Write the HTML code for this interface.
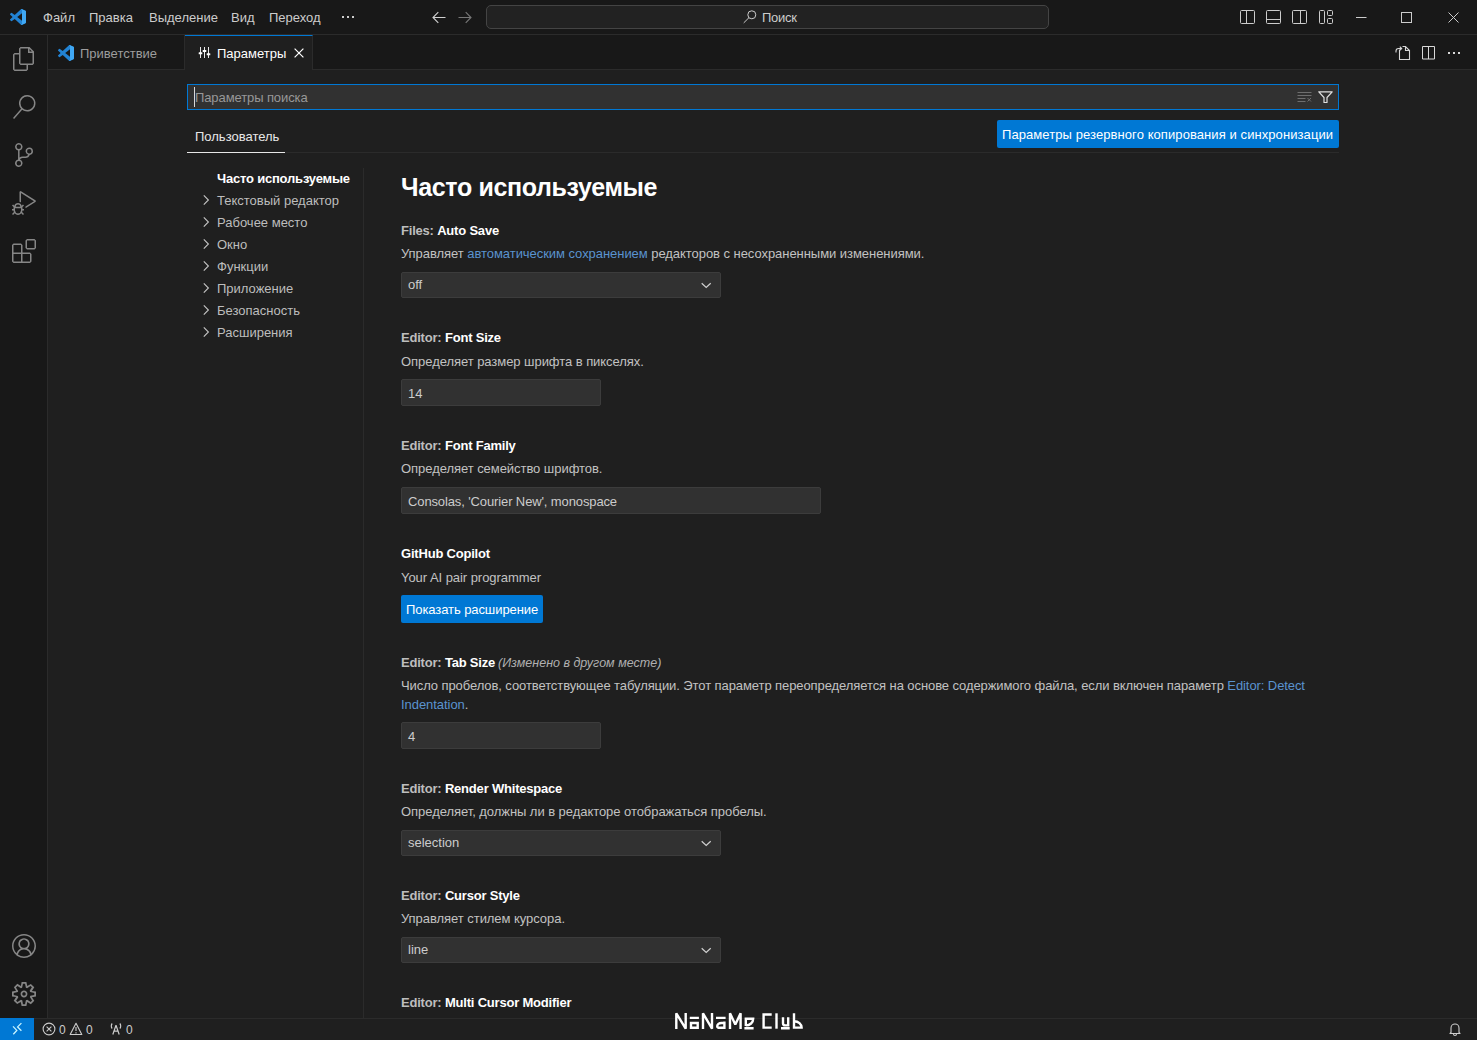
<!DOCTYPE html>
<html><head><meta charset="utf-8">
<style>
*{box-sizing:border-box;margin:0;padding:0}
html,body{width:1477px;height:1040px;overflow:hidden;background:#1f1f1f;font-family:"Liberation Sans",sans-serif;font-size:13px;color:#cccccc}
.a{position:absolute}
.t{position:absolute;white-space:nowrap;line-height:16px}
svg{position:absolute;overflow:visible}
#title{left:0;top:0;width:1477px;height:35px;background:#181818;border-bottom:1px solid #2b2b2b}
#act{left:0;top:35px;width:48px;height:983px;background:#181818;border-right:1px solid #2b2b2b}
#tabs{left:48px;top:35px;width:1429px;height:35px;background:#181818;border-bottom:1px solid #2b2b2b}
#status{left:0;top:1018px;width:1477px;height:22px;background:#1f1f1f;border-top:1px solid #2b2b2b}
.menu{color:#cccccc}
.ico{stroke:#cccccc;fill:none;stroke-width:1}
.aico{fill:#868686}
.lbl{color:#bdbdbd;font-weight:bold;letter-spacing:-0.2px}
.lbl b{color:#ffffff}
.desc{color:#c2c2c2;letter-spacing:-0.05px}
.link{color:#5a93cf}
.toc{color:#bdbdbd}
.inp{position:absolute;background:#313131;border:1px solid #3c3c3c;border-radius:2px}
.btn{position:absolute;background:#0078d4;border-radius:2px}
.val{color:#cccccc}
</style></head><body>

<!-- TITLE BAR -->
<div id="title" class="a"></div>
<svg style="left:10px;top:9px" width="16" height="16" viewBox="0 0 100 100">
  <path d="M96.46 10.8L75.86.87a6.23 6.23 0 0 0-7.1 1.2L29.35 38.04 12.19 25.01a4.16 4.16 0 0 0-5.32.24L1.36 30.26a4.16 4.16 0 0 0 0 6.16L16.24 50 1.36 63.58a4.16 4.16 0 0 0 0 6.16l5.5 5.01a4.16 4.16 0 0 0 5.32.24l17.16-13.03L68.76 97.93a6.23 6.23 0 0 0 7.1 1.2l20.6-9.92A6.25 6.25 0 0 0 100 83.58V16.42a6.25 6.25 0 0 0-3.54-5.62zM75.01 72.7L45.11 50l29.9-22.7z" fill="#2283d4"/>
  <path d="M75.86.87a6.23 6.23 0 0 0-7.1 1.2L75 6V94L68.76 97.93a6.23 6.23 0 0 0 7.1 1.2l20.6-9.92A6.25 6.25 0 0 0 100 83.58V16.42a6.25 6.25 0 0 0-3.54-5.620z" fill="#40a8f4"/>
</svg>
<div class="t menu" style="left:43px;top:10px">Файл</div>
<div class="t menu" style="left:89px;top:10px">Правка</div>
<div class="t menu" style="left:149px;top:10px">Выделение</div>
<div class="t menu" style="left:231px;top:10px">Вид</div>
<div class="t menu" style="left:269px;top:10px">Переход</div>
<svg style="left:342px;top:16px" width="12" height="3" viewBox="0 0 12 3"><rect x="0" y="0" width="2" height="2" fill="#cccccc"/><rect x="5" y="0" width="2" height="2" fill="#cccccc"/><rect x="10" y="0" width="2" height="2" fill="#cccccc"/></svg>

<!-- nav arrows -->
<svg style="left:432px;top:11px" width="14" height="13" viewBox="0 0 14 13"><path d="M13.5 6.5H1.2M6.3 1.2L1 6.5l5.3 5.3" fill="none" style="stroke:#d0d0d0;stroke-width:1.1"/></svg>
<svg style="left:458px;top:11px" width="14" height="13" viewBox="0 0 14 13"><path d="M0.5 6.5h12.3M7.7 1.2L13 6.5l-5.3 5.3" fill="none" style="stroke:#777777;stroke-width:1.1"/></svg>

<!-- command center -->
<div class="a" style="left:486px;top:5px;width:563px;height:24px;background:#222222;border:1px solid #444444;border-radius:5px"></div>
<svg style="left:743px;top:10px" width="14" height="14" viewBox="0 0 14 14"><circle cx="8.8" cy="4.8" r="4" class="ico" stroke-width="1.1"/><path d="M6 7.6L0.7 12.9" class="ico" stroke-width="1.2"/></svg>
<div class="t" style="left:762px;top:10px;color:#cccccc;letter-spacing:-0.3px">Поиск</div>

<!-- layout icons -->
<svg style="left:1240px;top:10px" width="16" height="14" viewBox="0 0 16 14"><rect x="0.5" y="0.5" width="14" height="13" rx="1" class="ico"/><path d="M6.5 0.5v13" class="ico"/></svg>
<svg style="left:1266px;top:10px" width="16" height="14" viewBox="0 0 16 14"><rect x="0.5" y="0.5" width="14" height="13" rx="1" class="ico"/><path d="M0.5 9.5h14" class="ico"/></svg>
<svg style="left:1292px;top:10px" width="16" height="14" viewBox="0 0 16 14"><rect x="0.5" y="0.5" width="14" height="13" rx="1" class="ico"/><path d="M8.5 0.5v13" class="ico"/></svg>
<svg style="left:1319px;top:10px" width="16" height="14" viewBox="0 0 16 14"><rect x="0.5" y="0.5" width="5" height="13" rx="1" class="ico"/><rect x="8.5" y="0.5" width="5" height="5" rx="1" class="ico"/><rect x="8.5" y="8.5" width="5" height="5" rx="1" class="ico"/></svg>
<!-- window controls -->
<svg style="left:1356px;top:12px" width="11" height="11" viewBox="0 0 11 11"><path d="M0 5.5h10.5" class="ico"/></svg>
<svg style="left:1401px;top:12px" width="11" height="11" viewBox="0 0 11 11"><rect x="0.5" y="0.5" width="10" height="10" class="ico"/></svg>
<svg style="left:1448px;top:12px" width="11" height="11" viewBox="0 0 11 11"><path d="M0.5 0.5l10 10M10.5 0.5l-10 10" class="ico"/></svg>

<!-- ACTIVITY BAR -->
<div id="act" class="a"></div>
<!-- explorer -->
<svg style="left:12px;top:47px" width="24" height="24" viewBox="0 0 24 24"><path class="aico" d="M17.5 0h-9L7 1.5V6H2.5L1 7.5v15.07L2.5 24h12.07L16 22.57V18h4.7l1.3-1.43V4.5L17.5 0zm0 2.12l2.38 2.38H17.5V2.12zm-3 20.38h-12v-15H7v9.07L8.5 18h6v4.5zm6-6h-12v-15H16V6h4.5v10.5z"/></svg>
<!-- search -->
<svg style="left:12px;top:95px" width="24" height="24" viewBox="0 0 24 24"><path class="aico" d="M15.25 0a8.25 8.25 0 0 0-6.18 13.72L1 22.88l1.12 1 8.05-9.12A8.251 8.251 0 1 0 15.25.01V0zm0 15a6.75 6.75 0 1 1 0-13.5 6.75 6.75 0 0 1 0 13.5z"/></svg>
<!-- scm -->
<svg style="left:12px;top:143px" width="24" height="24" viewBox="0 0 24 24"><path class="aico" d="M21.007 8.222A3.738 3.738 0 0 0 15.045 5.2a3.737 3.737 0 0 0 1.156 6.583 2.988 2.988 0 0 1-2.668 1.67h-2.99a4.456 4.456 0 0 0-2.989 1.165V7.4a3.737 3.737 0 1 0-1.494 0v9.117a3.776 3.776 0 1 0 1.816.099 2.99 2.99 0 0 1 2.668-1.667h2.99a4.484 4.484 0 0 0 4.223-3.039 3.736 3.736 0 0 0 3.25-3.687zM4.565 3.738a2.242 2.242 0 1 1 4.484 0 2.242 2.242 0 0 1-4.484 0zm4.484 16.441a2.242 2.242 0 1 1-4.484 0 2.242 2.242 0 0 1 4.484 0zm8.221-9.715a2.242 2.242 0 1 1 0-4.485 2.242 2.242 0 0 1 0 4.485z"/></svg>
<!-- debug -->
<svg style="left:12px;top:191px" width="24" height="24" viewBox="0 0 24 24"><path class="aico" d="M10.94 13.5l-1.32 1.32a3.73 3.73 0 0 0-7.24 0L1.06 13.5 0 14.56l1.72 1.72-.22.22V18H0v1.5h1.5v.08c.077.489.214.966.41 1.42L0 22.94 1.06 24l1.65-1.65A4.308 4.308 0 0 0 6 24a4.31 4.31 0 0 0 3.29-1.65L10.94 24 12 22.94 10.09 21c.198-.464.336-.951.41-1.45v-.1H12V18h-1.5v-1.5l-.22-.22L12 14.56l-1.06-1.060zM6 13.5a2.25 2.25 0 0 1 2.25 2.250h-4.5A2.250 2.250 0 0 1 6 13.500zm3 6a3.33 3.33 0 0 1-3 3 3.33 3.33 0 0 1-3-3v-2.25h6v2.25zm14.76-9.9v1.26L13.5 17.37V15.6l8.5-5.37L9 2v9.46a5.07 5.07 0 0 0-1.5-.72V.63L8.64 0l15.12 9.6z"/></svg>
<!-- extensions -->
<svg style="left:12px;top:239px" width="24" height="24" viewBox="0 0 24 24"><path class="aico" d="M13.5 1.5L15 0h7.5L24 1.5V9l-1.5 1.5H15L13.5 9V1.5zm1.5 0V9h7.5V1.5H15zM0 15V6l1.5-1.5H9L10.5 6v7.5H18l1.5 1.5v7.5L18 24H1.5L0 22.5V15zm9-1.5V6H1.5v7.5H9zM9 15H1.5v7.5H9V15zm1.5 7.5H18V15h-7.5v7.5z"/></svg>
<!-- account -->
<svg style="left:12px;top:934px" width="24" height="24" viewBox="0 0 16 16"><path class="aico" d="M16 7.992C16 3.58 12.416 0 8 0S0 3.58 0 7.992c0 2.43 1.104 4.62 2.832 6.09.016.016.032.016.032.032.144.112.288.224.448.336.08.048.144.111.224.175A7.98 7.98 0 0 0 8.016 16a7.98 7.98 0 0 0 4.48-1.375c.08-.048.144-.111.224-.16.144-.111.304-.223.448-.335.016-.016.032-.016.032-.032 1.696-1.487 2.8-3.676 2.8-6.106zm-8 7.001c-1.504 0-2.88-.48-4.016-1.279.016-.128.048-.255.08-.383a4.17 4.17 0 0 1 .416-.991c.176-.304.384-.576.64-.816.24-.24.528-.463.816-.639.304-.176.624-.304.976-.4A4.150 4.150 0 0 1 8 10.342a4.185 4.185 0 0 1 2.928 1.166c.368.368.656.8.864 1.295.112.288.192.592.24.911A7.03 7.03 0 0 1 8 14.993zm-2.448-7.4a2.49 2.49 0 0 1-.208-1.024c0-.351.064-.703.208-1.023.144-.32.336-.607.576-.847.24-.24.528-.431.848-.575.32-.144.672-.208 1.024-.208.368 0 .704.064 1.024.208.32.144.608.336.848.575.24.24.432.528.576.847.144.32.208.672.208 1.023 0 .368-.064.704-.208 1.023a2.84 2.84 0 0 1-.576.848 2.84 2.84 0 0 1-.848.575 2.715 2.715 0 0 1-2.064 0 2.84 2.84 0 0 1-.848-.575 2.526 2.526 0 0 1-.56-.848zm7.424 5.306c0-.032-.016-.048-.016-.08a5.22 5.22 0 0 0-.688-1.406 4.883 4.883 0 0 0-1.088-1.135 5.207 5.207 0 0 0-1.040-.608 2.82 2.82 0 0 0 .464-.383 4.2 4.2 0 0 0 .624-.784 3.624 3.624 0 0 0 .528-1.934 3.71 3.71 0 0 0-.288-1.47 3.799 3.799 0 0 0-.816-1.199 3.845 3.845 0 0 0-1.2-.8 3.72 3.72 0 0 0-1.472-.287 3.72 3.72 0 0 0-1.472.288 3.631 3.631 0 0 0-1.2.815 3.84 3.84 0 0 0-.8 1.199 3.71 3.71 0 0 0-.288 1.47c0 .352.048.688.144 1.007.096.336.224.640.4.927.16.288.384.544.624.784.144.144.304.271.48.383a5.12 5.12 0 0 0-1.040.624c-.416.32-.784.703-1.088 1.119a4.999 4.999 0 0 0-.688 1.406c-.016.032-.016.064-.016.08C1.776 11.636.992 9.910.992 7.992.992 4.140 4.144.991 8 .991s7.008 3.149 7.008 7.001a6.96 6.96 0 0 1-2.032 4.907z"/></svg>
<!-- gear -->
<svg style="left:12px;top:982px" width="24" height="24" viewBox="1 1 14 14"><path class="aico" d="M9.1 4.4L8.6 2H7.4l-.5 2.4-.7.3-2-1.3-.9.8 1.3 2-.2.7-2.4.5v1.2l2.4.5.3.8-1.300 2 .8.8 2-1.3.8.3.4 2.3h1.2l.5-2.4.8-.3 2 1.3.8-.8-1.3-2 .3-.8 2.3-.4V7.4l-2.4-.5-.3-.8 1.3-2-.8-.8-2 1.3-.7-.2zM9.4 1l.5 2.4L12 2.1l2 2-1.4 2.1 2.4.4v2.8l-2.4.5L14 12l-2 2-2.1-1.4-.5 2.4H6.6l-.5-2.4L4 13.9l-2-2 1.4-2.1L1 9.4V6.6l2.4-.5L2.1 4l2-2 2.1 1.4.4-2.4h2.8zm.6 7c0 1.1-.9 2-2 2s-2-.9-2-2 .9-2 2-2 2 .9 2 2zM8 9c.6 0 1-.4 1-1s-.4-1-1-1-1 .4-1 1 .4 1 1 1z"/></svg>

<!-- TABS -->
<div id="tabs" class="a"></div>
<div class="a" style="left:184px;top:35px;width:1px;height:34px;background:#2b2b2b"></div>
<div class="a" style="left:185px;top:35px;width:128px;height:35px;background:#1f1f1f;border-top:1px solid #0078d4;border-right:1px solid #2b2b2b"></div>
<svg style="left:58px;top:45px" width="16" height="16" viewBox="0 0 100 100">
  <path d="M96.46 10.8L75.86.87a6.23 6.23 0 0 0-7.1 1.2L29.35 38.04 12.19 25.01a4.16 4.16 0 0 0-5.32.24L1.36 30.26a4.16 4.16 0 0 0 0 6.16L16.24 50 1.36 63.58a4.16 4.16 0 0 0 0 6.16l5.5 5.01a4.16 4.16 0 0 0 5.32.24l17.16-13.03L68.76 97.93a6.23 6.23 0 0 0 7.1 1.2l20.6-9.92A6.25 6.25 0 0 0 100 83.58V16.42a6.25 6.25 0 0 0-3.54-5.62zM75.01 72.7L45.11 50l29.9-22.7z" fill="#2283d4"/>
  <path d="M75.86.87a6.23 6.23 0 0 0-7.1 1.2L75 6V94L68.76 97.93a6.23 6.23 0 0 0 7.1 1.2l20.6-9.92A6.25 6.25 0 0 0 100 83.58V16.42a6.25 6.25 0 0 0-3.54-5.620z" fill="#40a8f4"/>
</svg>
<div class="t" style="left:80px;top:46px;color:#9d9d9d">Приветствие</div>
<svg style="left:198px;top:47px" width="13" height="11" viewBox="0 0 13 11"><path d="M2.5 0v11M6.5 0v11M10.5 0v11" stroke="#e8e8e8" stroke-width="1"/><rect x="0.7" y="5.3" width="3.6" height="2" rx="0.5" fill="#ffffff"/><rect x="4.7" y="3" width="3.6" height="2" rx="0.5" fill="#ffffff"/><rect x="8.7" y="6.3" width="3.6" height="2" rx="0.5" fill="#ffffff"/></svg>
<div class="t" style="left:217px;top:46px;color:#ffffff">Параметры</div>
<svg style="left:294px;top:48px" width="10" height="10" viewBox="0 0 10 10"><path d="M0.6 0.6l8.8 8.8M9.4 0.6L0.6 9.4" stroke="#ffffff" stroke-width="1.2" fill="none"/></svg>
<!-- editor actions -->
<svg style="left:1395px;top:46px" width="16" height="14" viewBox="0 0 16 14"><path d="M4.5 3.5V13.5H14.5V4.5L10.5 0.5H7.5M10.5 0.5V4.5H14.5M1 6.5V5c0-1.7 1.2-2.5 2.6-2.5H6.5M4.8 0.7L6.7 2.5 4.8 4.3" fill="none" style="stroke:#d8d8d8;stroke-width:1.1"/></svg>
<svg style="left:1422px;top:46px" width="14" height="14" viewBox="0 0 14 14"><path d="M0.5 0.5h12v12.5H0.5zM6.5 0.5v12.5" fill="none" style="stroke:#d8d8d8;stroke-width:1"/></svg>
<svg style="left:1448px;top:52px" width="13" height="3" viewBox="0 0 13 3"><rect x="0" y="0" width="2" height="2" fill="#d8d8d8"/><rect x="5" y="0" width="2" height="2" fill="#d8d8d8"/><rect x="10" y="0" width="2" height="2" fill="#d8d8d8"/></svg>

<!-- SETTINGS HEADER -->
<div class="a" style="left:187px;top:84px;width:1152px;height:26px;background:#313131;border:1px solid #0078d4"></div>
<div class="a" style="left:194px;top:87px;width:1px;height:20px;background:#d8d8d8"></div>
<div class="t" style="left:195px;top:90px;color:#989898;letter-spacing:-0.1px">Параметры поиска</div>
<svg style="left:1297px;top:91px" width="16" height="12" viewBox="0 0 16 12"><path d="M0.5 1.5h14M0.5 4.5h14M0.5 7.5h8M0.5 10.5h8M10.5 7l3.5 3.5M14 7l-3.5 3.5" stroke="#6e6e6e" stroke-width="1" fill="none"/></svg>
<svg style="left:1318px;top:91px" width="15" height="12" viewBox="0 0 15 12"><path d="M0.8 0.8h13.4L9 6.5v5H6v-5z" stroke="#e0e0e0" stroke-width="1.2" fill="none" stroke-linejoin="round"/></svg>

<div class="t" style="left:195px;top:129px;color:#e7e7e7">Пользователь</div>
<div class="a" style="left:187px;top:152px;width:1152px;height:1px;background:#2b2b2b"></div>
<div class="a" style="left:187px;top:152px;width:98px;height:1px;background:#e7e7e7"></div>
<div class="btn" style="left:997px;top:120px;width:342px;height:28px"></div>
<div class="t" style="left:1002px;top:127px;color:#ffffff;letter-spacing:0.08px">Параметры резервного копирования и синхронизации</div>

<!-- TOC -->
<div class="a" style="left:363px;top:168px;width:1px;height:850px;background:#2b2b2b"></div>
<div class="t" style="left:217px;top:171px;color:#ffffff;font-weight:bold;letter-spacing:-0.2px">Часто используемые</div>
<svg style="left:202px;top:193px" width="8" height="14" viewBox="0 0 8 14"><path d="M1.8 2.3l4.6 4.7-4.6 4.7" stroke="#c5c5c5" stroke-width="1.1" fill="none"/></svg>
<div class="t toc" style="left:217px;top:193px">Текстовый редактор</div>
<svg style="left:202px;top:215px" width="8" height="14" viewBox="0 0 8 14"><path d="M1.8 2.3l4.6 4.7-4.6 4.7" stroke="#c5c5c5" stroke-width="1.1" fill="none"/></svg>
<div class="t toc" style="left:217px;top:215px">Рабочее место</div>
<svg style="left:202px;top:237px" width="8" height="14" viewBox="0 0 8 14"><path d="M1.8 2.3l4.6 4.7-4.6 4.7" stroke="#c5c5c5" stroke-width="1.1" fill="none"/></svg>
<div class="t toc" style="left:217px;top:237px">Окно</div>
<svg style="left:202px;top:259px" width="8" height="14" viewBox="0 0 8 14"><path d="M1.8 2.3l4.6 4.7-4.6 4.7" stroke="#c5c5c5" stroke-width="1.1" fill="none"/></svg>
<div class="t toc" style="left:217px;top:259px">Функции</div>
<svg style="left:202px;top:281px" width="8" height="14" viewBox="0 0 8 14"><path d="M1.8 2.3l4.6 4.7-4.6 4.7" stroke="#c5c5c5" stroke-width="1.1" fill="none"/></svg>
<div class="t toc" style="left:217px;top:281px">Приложение</div>
<svg style="left:202px;top:303px" width="8" height="14" viewBox="0 0 8 14"><path d="M1.8 2.3l4.6 4.7-4.6 4.7" stroke="#c5c5c5" stroke-width="1.1" fill="none"/></svg>
<div class="t toc" style="left:217px;top:303px">Безопасность</div>
<svg style="left:202px;top:325px" width="8" height="14" viewBox="0 0 8 14"><path d="M1.8 2.3l4.6 4.7-4.6 4.7" stroke="#c5c5c5" stroke-width="1.1" fill="none"/></svg>
<div class="t toc" style="left:217px;top:325px">Расширения</div>

<!-- HEADING -->
<div class="a" style="left:401px;top:172px;font-size:25px;line-height:30px;font-weight:bold;color:#ffffff;white-space:nowrap;letter-spacing:-0.35px">Часто используемые</div>

<!-- SETTINGS LIST -->
<!-- 1 auto save -->
<div class="t lbl" style="left:401px;top:223px">Files: <b>Auto Save</b></div>
<div class="t desc" style="left:401px;top:246px">Управляет <span class="link">автоматическим сохранением</span> редакторов с несохраненными изменениями.</div>
<div class="inp" style="left:401px;top:272px;width:320px;height:26px"></div>
<div class="t val" style="left:408px;top:277px">off</div>
<svg style="left:699px;top:280px" width="14" height="10" viewBox="0 0 14 10"><path d="M2.7 3.2L7.2 7.5 11.7 3.2" stroke="#d0d0d0" stroke-width="1.2" fill="none"/></svg>

<!-- 2 font size -->
<div class="t lbl" style="left:401px;top:330px">Editor: <b>Font Size</b></div>
<div class="t desc" style="left:401px;top:354px">Определяет размер шрифта в пикселях.</div>
<div class="inp" style="left:401px;top:379px;width:200px;height:27px"></div>
<div class="t val" style="left:408px;top:386px">14</div>

<!-- 3 font family -->
<div class="t lbl" style="left:401px;top:438px">Editor: <b>Font Family</b></div>
<div class="t desc" style="left:401px;top:461px">Определяет семейство шрифтов.</div>
<div class="inp" style="left:401px;top:487px;width:420px;height:27px"></div>
<div class="t val" style="left:408px;top:494px;letter-spacing:-0.12px">Consolas, 'Courier New', monospace</div>

<!-- 4 copilot -->
<div class="t" style="left:401px;top:546px;color:#ffffff;font-weight:bold;letter-spacing:-0.2px">GitHub Copilot</div>
<div class="t desc" style="left:401px;top:570px">Your AI pair programmer</div>
<div class="btn" style="left:401px;top:595px;width:142px;height:28px"></div>
<div class="t" style="left:406px;top:602px;color:#ffffff;letter-spacing:-0.08px">Показать расширение</div>

<!-- 5 tab size -->
<div class="t lbl" style="left:401px;top:655px">Editor: <b>Tab Size</b></div>
<div class="t" style="left:498px;top:655px;color:#b0b0b0;font-style:italic;font-size:12.5px">(Изменено в другом месте)</div>
<div class="t desc" style="left:401px;top:678px;letter-spacing:-0.085px">Число пробелов, соответствующее табуляции. Этот параметр переопределяется на основе содержимого файла, если включен параметр <span class="link">Editor: Detect</span></div>
<div class="t desc" style="left:401px;top:697px"><span class="link">Indentation</span>.</div>
<div class="inp" style="left:401px;top:722px;width:200px;height:27px"></div>
<div class="t val" style="left:408px;top:729px">4</div>

<!-- 6 render whitespace -->
<div class="t lbl" style="left:401px;top:781px">Editor: <b>Render Whitespace</b></div>
<div class="t desc" style="left:401px;top:804px">Определяет, должны ли в редакторе отображаться пробелы.</div>
<div class="inp" style="left:401px;top:830px;width:320px;height:26px"></div>
<div class="t val" style="left:408px;top:835px">selection</div>
<svg style="left:699px;top:838px" width="14" height="10" viewBox="0 0 14 10"><path d="M2.7 3.2L7.2 7.5 11.7 3.2" stroke="#d0d0d0" stroke-width="1.2" fill="none"/></svg>

<!-- 7 cursor style -->
<div class="t lbl" style="left:401px;top:888px">Editor: <b>Cursor Style</b></div>
<div class="t desc" style="left:401px;top:911px">Управляет стилем курсора.</div>
<div class="inp" style="left:401px;top:937px;width:320px;height:26px"></div>
<div class="t val" style="left:408px;top:942px">line</div>
<svg style="left:699px;top:945px" width="14" height="10" viewBox="0 0 14 10"><path d="M2.7 3.2L7.2 7.5 11.7 3.2" stroke="#d0d0d0" stroke-width="1.2" fill="none"/></svg>

<!-- 8 multi cursor -->
<div class="t lbl" style="left:401px;top:995px">Editor: <b>Multi Cursor Modifier</b></div>

<!-- STATUS -->
<div id="status" class="a"></div>
<div class="a" style="left:0;top:1018px;width:34px;height:22px;background:#0078d4"></div>
<svg style="left:12px;top:1022px" width="11" height="13" viewBox="0 0 11 13"><path d="M1 4.4L4.8 8.4 1.3 12.2M9.4 1.1L5.6 4.9 9.4 8.7" stroke="#c8f4ff" stroke-width="1.3" fill="none"/></svg>
<svg style="left:42px;top:1022px" width="14" height="14" viewBox="0 0 14 14"><circle cx="7" cy="7" r="5.9" stroke="#cccccc" stroke-width="1.1" fill="none"/><path d="M4.6 4.6l4.8 4.8M9.4 4.6l-4.8 4.8" stroke="#cccccc" stroke-width="1.1"/></svg>
<div class="t" style="left:59px;top:1022px;color:#cccccc;font-size:12px">0</div>
<svg style="left:69px;top:1022px" width="14" height="14" viewBox="0 0 14 14"><path d="M7 1.2L12.8 12.5H1.2z" stroke="#cccccc" stroke-width="1.1" fill="none" stroke-linejoin="round"/><path d="M7 5v4M7 10.2v1.3" stroke="#cccccc" stroke-width="1.1"/></svg>
<div class="t" style="left:86px;top:1022px;color:#cccccc;font-size:12px">0</div>
<svg style="left:110px;top:1022px" width="13" height="14" viewBox="0 0 13 14"><path d="M6 3.2L2.8 12.5M6 3.2l3.2 9.3M3.9 9.2h4.2M2.2 1.5C1 2.7 1 5.3 2.2 6.5M9.8 1.5c1.2 1.2 1.2 3.8 0 5" stroke="#cccccc" stroke-width="1.2" fill="none"/></svg>
<div class="t" style="left:126px;top:1022px;color:#cccccc;font-size:12px">0</div>
<svg style="left:1449px;top:1022px" width="12" height="14" viewBox="0 0 12 14"><path d="M2 10.5V6a4 4 0 0 1 8 0v4.5l1 1H1z M4.5 12a1.5 1.5 0 0 0 3 0" stroke="#cccccc" stroke-width="1.1" fill="none" stroke-linejoin="round"/></svg>
<!-- watermark -->
<svg style="left:670px;top:1005px" width="140" height="30" viewBox="0 0 140 30"><g fill="none" stroke="#ffffff" stroke-width="2.4" stroke-linejoin="miter" stroke-miterlimit="2">
<path d="M6.3 24V8.3L15.7 23.7V8"/>
<path d="M19.8 12.9H28.9M21 18h6.7v4.7H21z"/>
<path d="M33 24V8.3L42 23.7V8"/>
<path d="M46 12.9H55.6M54.4 16.5V24M54.4 18H51.5C49 18 47.2 19.5 47.2 21.2c0 1.3 1 1.6 2.4 1.6H54.4"/>
<path d="M60 24V8.3L65.3 19.5L70.6 8.3V24"/>
<path d="M75.8 12.6V21M75 13.8H83.2C83.2 17.5 80 20.4 75.8 20.4M74.4 23.2H83.6"/>
<path d="M101.7 9.5H93.6V22.6H101.7"/>
<path d="M106.5 8.3V23.7"/>
<path d="M113 12.2V18.2c0 1.6.8 2.2 2.2 2.2H118.2V12.2M111 23.2H119.7"/>
<path d="M124 8.3V22.6H131.6C131.6 19 128.5 16.2 124 16.2"/>
</g></svg>

</body></html>
